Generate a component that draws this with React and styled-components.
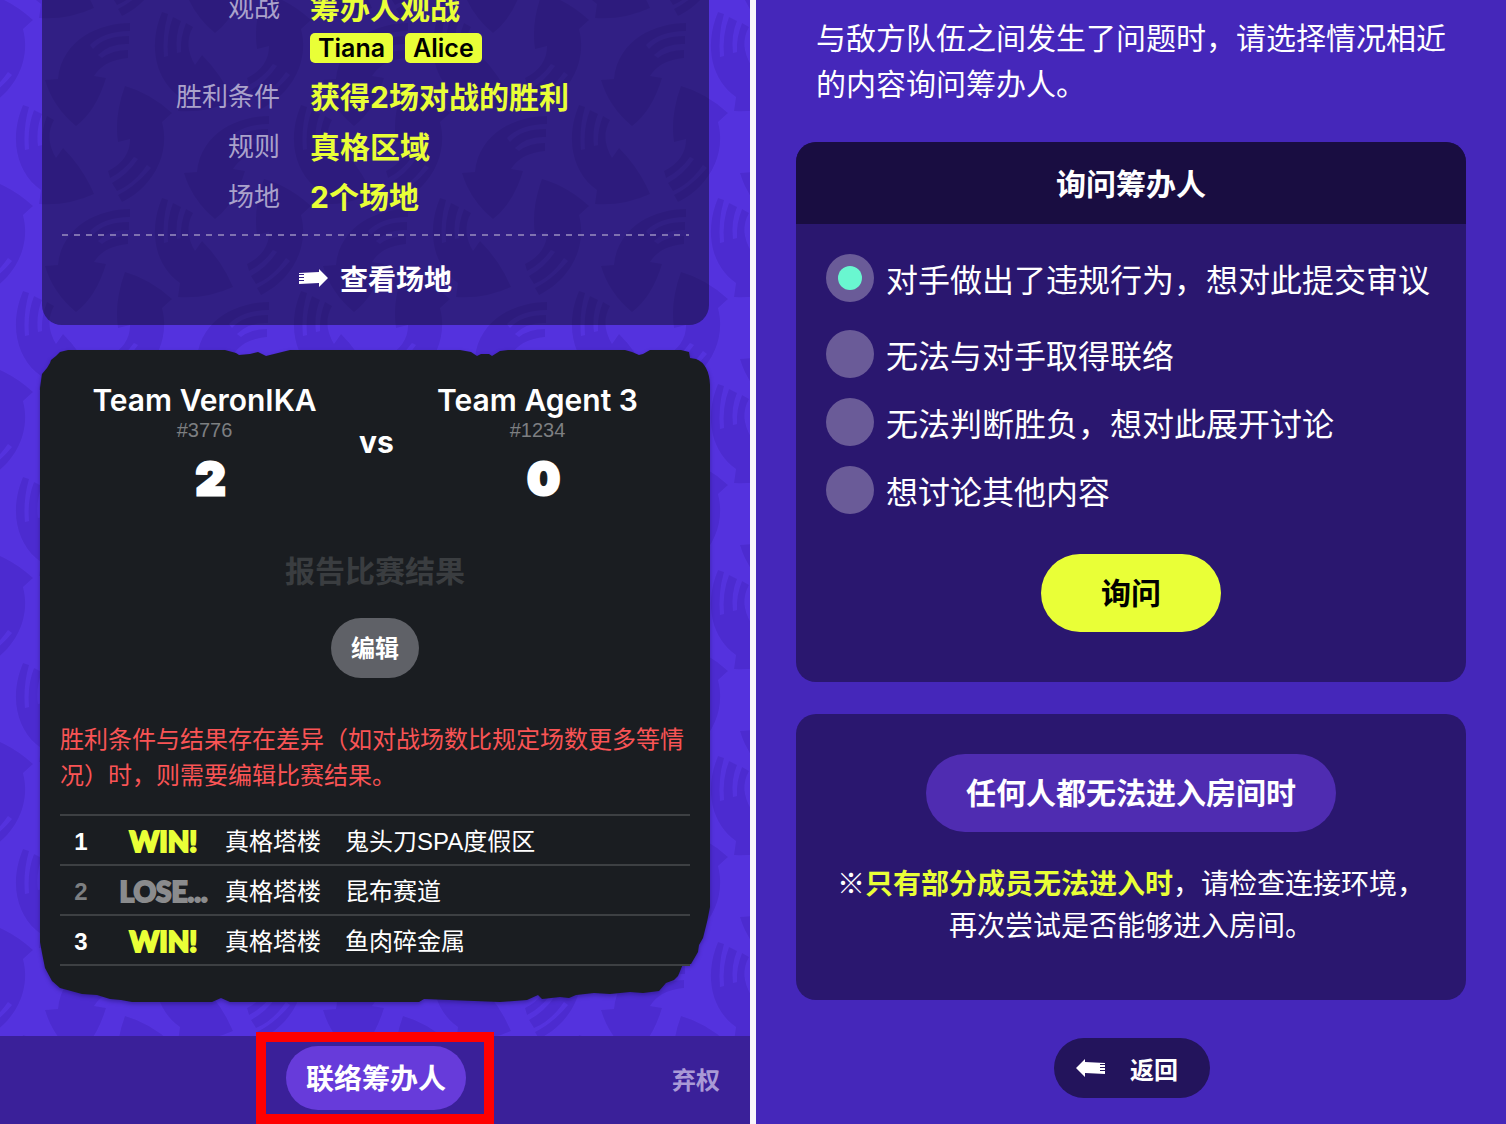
import React from 'react';
import styled, { createGlobalStyle } from 'styled-components';

const GlobalStyle = createGlobalStyle`
    * {
        box-sizing: border-box;
    }

    body {
        margin: 0;
        background: #f8f6fc;
        color: #ffffff;
        font-family: 'Liberation Sans', 'Noto Sans CJK SC', sans-serif;
        font-size: 24px;
    }

    button {
        border: 0;
        padding: 0 0 3px;
        font-family: inherit;
        color: inherit;
        cursor: pointer;
    }
`;

const LATIN = "Inter, 'Noto Sans CJK SC', sans-serif";

const Screens = styled.div`
    display: grid;
    grid-template-columns: 1fr 1fr;
    gap: 6px;
    min-height: 100vh;
`;

const MatchScreen = styled.section`
    position: relative;
    display: flex;
    flex-direction: column;
    overflow: hidden;
    background: #5432de;
`;

const PatternLayer = styled.svg`
    position: absolute;
    inset: 0;
    width: 100%;
    height: 100%;
`;

const InfoPanel = styled.div`
    position: relative;
    margin: -37px 41px 0 42px;
    padding: 20px 20px 0;
    border-radius: 20px;
    background: rgba(14, 12, 42, 0.5);
`;

const InfoList = styled.dl`
    display: grid;
    grid-template-columns: 218px 1fr;
    column-gap: 30px;
    margin: 0;
    line-height: 50px;
`;

const InfoLabel = styled.dt`
    font-size: 26px;
    text-align: right;
    color: #aaa2cb;
`;

const InfoValue = styled.dd`
    margin: 0;
    font-family: ${LATIN};
    font-size: 30px;
    font-weight: 700;
    color: #e9ff37;
`;

const Tags = styled.div`
    display: flex;
    gap: 12px;
    margin-bottom: 9px;
`;

const Tag = styled.span`
    padding: 0 8px;
    border-radius: 5px;
    background: #e9ff37;
    color: #000000;
    font-size: 25px;
    font-weight: 600;
    line-height: 30px;
`;

const Divider = styled.hr`
    height: 2px;
    margin: 12px 0 0;
    border: 0;
    background: repeating-linear-gradient(90deg, #7f72b0 0 6px, transparent 6px 12px);
`;

const StageLink = styled.a`
    display: flex;
    align-items: center;
    justify-content: center;
    gap: 12px;
    height: 89px;
    padding-bottom: 6px;
    font-size: 28px;
    font-weight: 700;
    color: #ffffff;
    text-decoration: none;
`;

const ArrowSvg = styled.svg`
    width: 29px;
    height: 18px;
    transform: ${props => (props.$left ? 'scaleX(-1)' : 'none')};
`;

const ResultCard = styled.div`
    position: relative;
    display: flex;
    flex-direction: column;
    margin: 25px 40px 34px;
    padding: 30px 20px 36px;
`;

const CardShape = styled.svg`
    position: absolute;
    inset: 0;
    width: 100%;
    height: 100%;
    overflow: visible;
    filter: drop-shadow(0 2px 2px rgba(20, 10, 80, 0.4));
`;

const Versus = styled.div`
    position: relative;
    display: grid;
    grid-template-columns: 1fr 44px 1fr;
    padding-right: 8px;
    text-align: center;
    font-family: ${LATIN};
`;

const TeamName = styled.div`
    font-size: 30px;
    font-weight: 600;
    line-height: 40px;
    white-space: nowrap;
`;

const TeamId = styled.div`
    font-family: 'Liberation Sans', sans-serif;
    font-size: 20px;
    line-height: 20px;
    color: #7d7f81;
`;

const Score = styled.div`
    padding-left: 12px;
    font-size: 46px;
    font-weight: 900;
    line-height: 76px;
    -webkit-text-stroke: 3px #ffffff;
`;

const VsMark = styled.div`
    padding: 42px 0 0 10px;
    font-size: 30px;
    font-weight: 700;
    line-height: 40px;
`;

const ReportButton = styled.button`
    position: relative;
    align-self: center;
    margin-top: 36px;
    padding: 0;
    background: none;
    font-size: 30px;
    font-weight: 700;
    line-height: 40px;
    color: #3a3d40;
`;

const EditButton = styled.button`
    position: relative;
    align-self: center;
    width: 88px;
    height: 60px;
    margin-top: 26px;
    border-radius: 30px;
    background: #5f6167;
    font-size: 24px;
    font-weight: 700;
`;

const Warning = styled.p`
    position: relative;
    margin: 44px 0 20px;
    line-height: 36px;
    color: #f95455;
`;

const Battles = styled.table`
    position: relative;
    width: 100%;
    border-collapse: collapse;
    line-height: 45px;
    text-align: left;

    tr {
        border-top: 2px solid #3d4043;
        border-bottom: 2px solid #3d4043;
    }

    td,
    th {
        padding: 3px 0 0;
        white-space: nowrap;
    }
`;

const BattleNo = styled.th`
    width: 42px;
    text-align: center;
    color: ${props => (props.$win ? '#ffffff' : '#7d7f81')};
`;

const Outcome = styled.td`
    width: 123px;
    text-align: center;
    font-family: Lato, sans-serif;
    font-size: 28px;
    font-weight: 900;
    color: ${props => (props.$win ? '#e9ff37' : '#8a8b8d')};
    -webkit-text-stroke: 2px currentColor;
`;

const BottomBar = styled.footer`
    position: relative;
    display: grid;
    grid-template-columns: 1fr auto 1fr;
    align-items: center;
    height: 88px;
    margin-top: auto;
    background: #3a2099;
`;

const Highlight = styled.div`
    grid-column: 2;
    height: 92px;
    margin-top: -4px;
    padding: 4px 18px 4px 20px;
    border: 10px solid #ff0000;
`;

const ContactButton = styled.button`
    width: 180px;
    height: 64px;
    border-radius: 32px;
    background: #673bda;
    font-size: 28px;
    font-weight: 700;
`;

const ForfeitButton = styled.button`
    justify-self: end;
    margin-right: 30px;
    background: none;
    font-size: 24px;
    font-weight: 700;
    color: #a99ad6;
`;

const InquiryScreen = styled.section`
    display: flex;
    flex-direction: column;
    padding: 16px 40px 26px;
    background: #4527ba;
`;

const Intro = styled.p`
    margin: 0 20px;
    font-size: 30px;
    line-height: 46px;
`;

const Card = styled.div`
    display: flex;
    flex-direction: column;
    align-items: center;
    margin-top: ${props => props.$gap};
    border-radius: 20px;
    overflow: hidden;
    background: #2a176f;
`;

const CardTitle = styled.h2`
    width: 100%;
    margin: 0;
    padding-top: 4px;
    background: #190d41;
    font-size: 30px;
    line-height: 78px;
    text-align: center;
`;

const Options = styled.form`
    display: flex;
    flex-direction: column;
    align-items: center;
    width: 100%;
    padding: 30px 30px 50px;
`;

const Option = styled.label`
    display: flex;
    align-items: center;
    gap: 12px;
    width: 100%;
    height: 48px;
    margin-bottom: 20px;
    font-size: 32px;
    white-space: nowrap;

    &:first-child {
        margin-bottom: 28px;
    }
`;

const Radio = styled.input`
    flex: none;
    display: grid;
    place-items: center;
    width: 48px;
    height: 48px;
    margin: 0;
    appearance: none;
    border-radius: 50%;
    background: #6a5b98;

    &:checked::before {
        content: '';
        width: 24px;
        height: 24px;
        border-radius: 50%;
        background: #69f7d0;
    }
`;

const PillButton = styled.button`
    height: 78px;
    padding: 0 ${props => props.$pad} 5px;
    border-radius: 39px;
    background: ${props => (props.$primary ? '#e9ff37' : '#4f2cb1')};
    color: ${props => (props.$primary ? '#000000' : '#ffffff')};
    font-size: 30px;
    font-weight: 700;
`;

const AskButton = styled(PillButton)`
    margin-top: 20px;
`;

const RoomHelp = styled.div`
    padding: 40px 30px 52px;
    text-align: center;
    font-size: 28px;
    line-height: 42px;
`;

const Note = styled.p`
    margin: 32px 0 0;

    strong {
        color: #e9ff37;
    }
`;

const BackButton = styled.button`
    align-self: center;
    display: flex;
    align-items: center;
    justify-content: space-between;
    width: 156px;
    height: 60px;
    margin: 38px 0 0 2px;
    padding: 0 32px 0 22px;
    border-radius: 30px;
    background: #23145c;
    font-size: 24px;
    font-weight: 700;
`;

// where each arrow trio sits in the tile, edge copies included
const TRIOS = [
    [76, 126],
    [215, 33],
    [-63, 33],
    [76, -60],
    [215, 219],
    [-63, 219],
];

const Pattern = () => (
    <PatternLayer aria-hidden="true">
        <defs>
            <g id="trio" fill="#4c2bd0">
                <path d="M54-103C24-103-14-87-18-47L-31-46Q-23-19 0 0Q20-15 30-48L18-50Q28-66 52-68V-76Q36-76 26-68L22-71Q34-83 53-82V-90Q28-90 17-77L14-81Q28-95 54-95Z" />
                <path d="M49-40Q74-33 96-13L86-4C95 30 75 62 46 76L42 69Q60 60 75 42L71 39Q58 58 41 65L36 57Q52 48 62 33L58 31Q48 45 34 52L32 45Q54 34 54 13L42 16Q38-10 49-40Z" />
                <path d="M-53-21L-47-19Q-53 2-51 24L-47 23Q-49 2-42-16L-34-12Q-40 2-38 20L-34 19Q-35 5-29-10L-22-6Q-32 12-20 32L-13 22Q7 42 18 68Q-8 80-37 78L-35 64C-58 48-68 15-53-21Z" />
            </g>
            <pattern id="arrows" width="278" height="186" patternUnits="userSpaceOnUse">
                {TRIOS.map(([x, y]) => (
                    <use key={`${x},${y}`} href="#trio" x={x} y={y} />
                ))}
            </pattern>
        </defs>
        <rect width="100%" height="100%" fill="url(#arrows)" />
    </PatternLayer>
);

const Arrow = ({ left }) => (
    <ArrowSvg $left={left} viewBox="0 0 29 18" fill="#ffffff" aria-hidden="true">
        <path d="M0 4L20 3V0L29 9L20 18V14L0 15V12H5V11H0V9H5V8H0V6H5V5H0Z" />
    </ArrowSvg>
);

const battles = [
    { no: 1, win: true, rule: '真格塔楼', stage: '鬼头刀SPA度假区' },
    { no: 2, win: false, rule: '真格塔楼', stage: '昆布赛道' },
    { no: 3, win: true, rule: '真格塔楼', stage: '鱼肉碎金属' },
];

const options = [
    '对手做出了违规行为，想对此提交审议',
    '无法与对手取得联络',
    '无法判断胜负，想对此展开讨论',
    '想讨论其他内容',
];

const Team = ({ name, id, score }) => (
    <div>
        <TeamName>{name}</TeamName>
        <TeamId>{id}</TeamId>
        <Score>{score}</Score>
    </div>
);

const Match = () => (
    <MatchScreen>
        <Pattern />
        <InfoPanel>
            <InfoList>
                <InfoLabel>观战</InfoLabel>
                <InfoValue>
                    筹办人观战
                    <Tags>
                        <Tag>Tiana</Tag>
                        <Tag>Alice</Tag>
                    </Tags>
                </InfoValue>
                <InfoLabel>胜利条件</InfoLabel>
                <InfoValue>获得2场对战的胜利</InfoValue>
                <InfoLabel>规则</InfoLabel>
                <InfoValue>真格区域</InfoValue>
                <InfoLabel>场地</InfoLabel>
                <InfoValue>2个场地</InfoValue>
            </InfoList>
            <Divider />
            <StageLink href="#stages">
                <Arrow />
                查看场地
            </StageLink>
        </InfoPanel>

        <ResultCard>
            <CardShape viewBox="0 0 670 652" preserveAspectRatio="none" aria-hidden="true">
                <path
                    fill="#1a1d21"
                    d="M0 38L2 24L7 18L10 13L11 10L16 6L20 2L28 0H185L196 3L199 5L210 4L218 2L226 6L250 0H420L431 2L437 6L441 4H449L452 6L460 1L468 0H585L592 2L599 5L603 4L610 0H641L649 2L650 8L656 9Q669 14 670 35V557L667 572L663 588L659 595L658 602L651 614H643L638 626L634 630L626 633L619 641L603 643L590 642L570 644L554 643L536 645L529 648L520 647L502 649L498 645L487 650L460 652L384 649L379 652H190L181 648L172 652H92L81 650L70 649L57 645L42 644L20 638L12 631L5 618L2 603L0 592Z"
                />
            </CardShape>
            <Versus>
                <Team name="Team VeronIKA" id="#3776" score="2" />
                <VsMark>vs</VsMark>
                <Team name="Team Agent 3" id="#1234" score="0" />
            </Versus>
            <ReportButton disabled>报告比赛结果</ReportButton>
            <EditButton>编辑</EditButton>
            <Warning>胜利条件与结果存在差异（如对战场数比规定场数更多等情况）时，则需要编辑比赛结果。</Warning>
            <Battles>
                <tbody>
                    {battles.map(b => (
                        <tr key={b.no}>
                            <BattleNo scope="row" $win={b.win}>{b.no}</BattleNo>
                            <Outcome $win={b.win}>{b.win ? 'WIN!' : 'LOSE...'}</Outcome>
                            <td>{`${b.rule}\u3000${b.stage}`}</td>
                        </tr>
                    ))}
                </tbody>
            </Battles>
        </ResultCard>

        <BottomBar>
            <Highlight>
                <ContactButton>联络筹办人</ContactButton>
            </Highlight>
            <ForfeitButton>弃权</ForfeitButton>
        </BottomBar>
    </MatchScreen>
);

const Inquiry = () => (
    <InquiryScreen>
        <Intro>与敌方队伍之间发生了问题时，请选择情况相近的内容询问筹办人。</Intro>
        <Card $gap="34px">
            <CardTitle>询问筹办人</CardTitle>
            <Options onSubmit={e => e.preventDefault()}>
                {options.map((text, i) => (
                    <Option key={text}>
                        <Radio type="radio" name="reason" defaultChecked={i === 0} />
                        {text}
                    </Option>
                ))}
                <AskButton $primary $pad="60px">询问</AskButton>
            </Options>
        </Card>
        <Card $gap="32px">
            <RoomHelp>
                <PillButton $pad="40px">任何人都无法进入房间时</PillButton>
                <Note>
                    ※<strong>只有部分成员无法进入时</strong>，请检查连接环境，
                    <br />
                    再次尝试是否能够进入房间。
                </Note>
            </RoomHelp>
        </Card>
        <BackButton>
            <Arrow left />
            返回
        </BackButton>
    </InquiryScreen>
);

const App = () => (
    <Screens lang="zh-CN">
        <GlobalStyle />
        <Match />
        <Inquiry />
    </Screens>
);

export default App;
